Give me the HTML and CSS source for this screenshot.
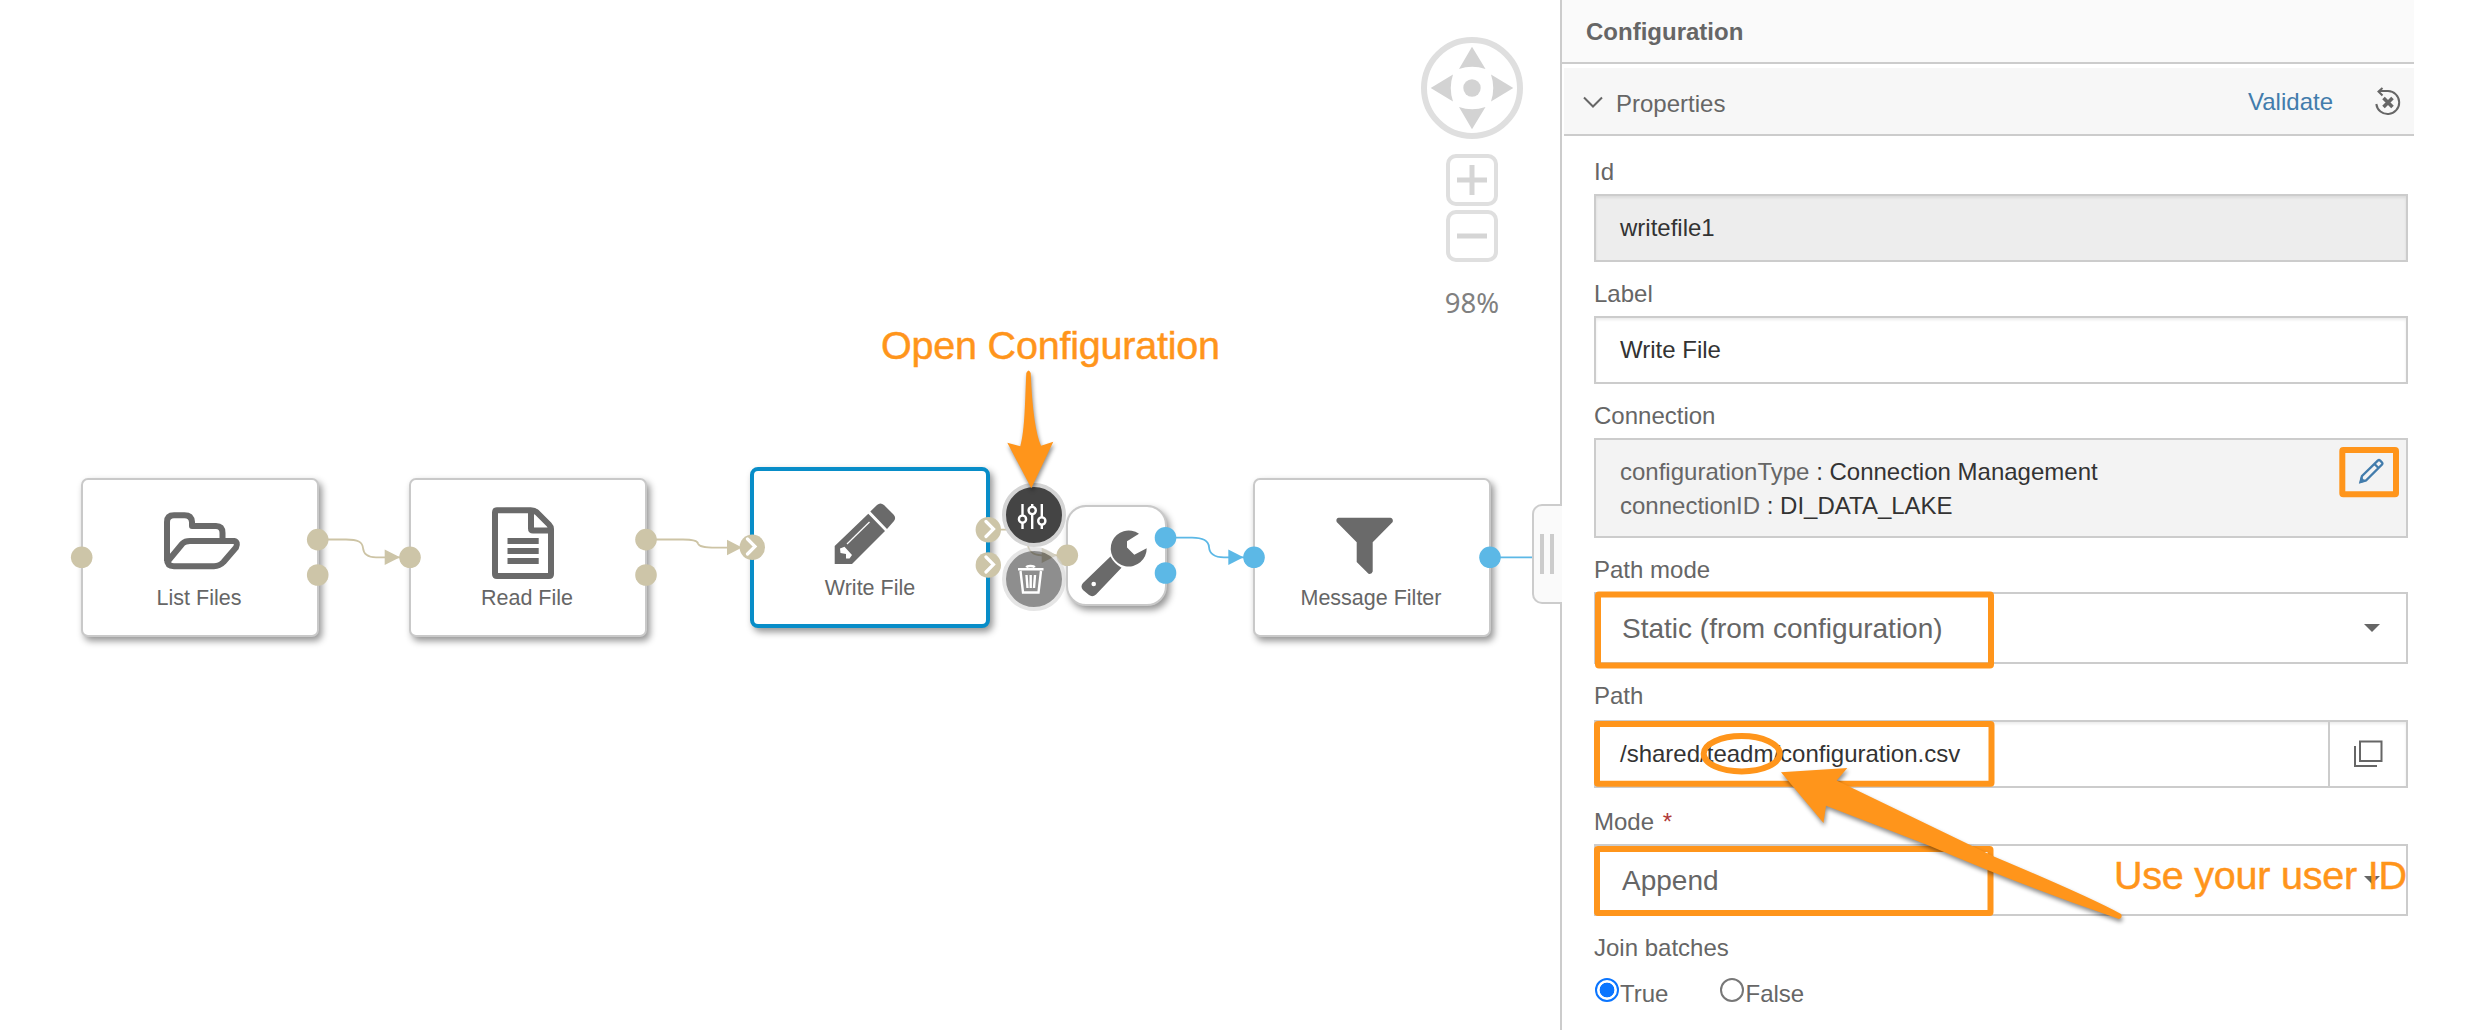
FILE: index.html
```html
<!DOCTYPE html>
<html lang="en">
<head>
<meta charset="utf-8">
<title>Pipeline Modeler</title>
<link rel="stylesheet" href="styles.css">
</head>
<body>
<div class="app">
  <main class="canvas">
    <svg class="layer" viewBox="0 0 1560 1030">
      <g class="wire sand">
        <path d="M318 539.5H346C358 539.5 362.5 542 363 548C363.5 554 367 557.3 376 557.3H400"/>
        <path d="M646 539.5H683C693 539.5 697.5 541 698 543.5C699 546.500 703 547.600 716 547.600H738"/>
        <path d="M988 529.700H1010C1022 529.700 1027 533 1027.500 542C1028 551 1032 555.300 1042 555.300H1062"/>
      </g>
      <g class="wire sky">
        <path d="M1166 537.700H1192C1204 537.700 1208.500 541 1209 547C1209.500 554 1214 557.300 1224 557.300H1246"/>
        <path d="M1490 557.300H1560"/>
      </g>
      <g class="sand-fill">
        <path d="M384.700 549.500V565L400 557.300Z"/>
        <path d="M727 539.700V555.300L742 547.500Z"/>
        <path d="M1041.700 547.700V563L1057 555.300Z"/>
      </g>
      <path class="sky-fill" d="M1228.300 549.500V565L1243.500 557.300Z"/>
    </svg>

    <div class="node list-files">
      <svg class="glyph" viewBox="0 0 238 159">
        <g class="outline" transform="translate(-81 -478)">
          <path d="M167 561V522Q167 515.300 174 515.300H184.500Q191.500 515.300 192 522V526H216Q222.500 526 222.500 533V540"/>
          <path d="M168 561L182.500 543.500Q185 541 190 541H234Q238.500 542 236 547.500L223.500 562Q219.500 566.200 214 566.200H174Q167 566.200 167 559"/>
        </g>
      </svg>
      <span class="caption">List Files</span>
    </div>
    <div class="node read-file">
      <svg class="glyph" viewBox="0 0 238 159">
        <g class="outline" transform="translate(-409 -478)">
          <path d="M531.500 510.300H497Q495 510.300 495 512.300V574Q495 576 497 576H549Q551 576 551 574V529Q551 526.500 549 524.500L537 512.500Q534.500 510.300 531 510.300V528.500Q531 530.500 533 530.500H551"/>
          <path stroke-linecap="butt" d="M507.500 541H538.700M507.500 551H538.700M507.500 561H538.700"/>
        </g>
      </svg>
      <span class="caption">Read File</span>
    </div>
    <div class="node write-file selected">
      <svg class="glyph" viewBox="0 0 240 161">
        <g transform="translate(-750 -467)">
          <path class="solid" d="M834.700 564V546L868.300 513.700L885 531L852 564ZM870.300 511.500L877 505Q880.300 502 884 505L893.500 514.500Q896.500 517.500 894 521L887 529Z"/>
          <path class="hairline" d="M847 544L869.500 522"/>
          <path class="knock" d="M840 548.500L844.500 546.700L852 555L849.500 558.500H846V554L840.500 553Z"/>
        </g>
      </svg>
      <span class="caption">Write File</span>
    </div>
    <div class="node tool">
      <svg class="glyph" viewBox="0 0 101 101">
        <g transform="translate(-1066 -505)">
          <path class="solid" d="M1139 533.700L1127 541.200V547.500L1134.300 554.700L1146.700 548.200A18 18 0 1 1 1139 533.700Z"/>
          <path class="solid" d="M1110.500 556.500Q1114 563.500 1121.500 567.700L1096 594.500Q1092.500 597.500 1089 595L1083 590Q1080 586.500 1083 583Z"/>
          <circle class="knock" cx="1093.700" cy="584" r="2.300"/>
        </g>
      </svg>
    </div>
    <div class="node message-filter">
      <svg class="glyph" viewBox="0 0 238 159">
        <path class="solid" transform="translate(-1253 -478)" d="M1338.500 517.700H1390.500Q1393.500 518.500 1392.700 522L1372.700 542.300V571.500Q1372 574.500 1368.500 573.800L1356.700 562V542.300L1336.700 522Q1335.500 518.500 1338.500 517.700Z"/>
      </svg>
      <span class="caption">Message Filter</span>
    </div>

    <svg class="layer" viewBox="0 0 1560 1030">
      <g class="sand-fill">
        <circle cx="81.700" cy="557.300" r="10.800"/><circle cx="317.700" cy="539.600" r="10.800"/><circle cx="317.700" cy="575" r="10.800"/>
        <circle cx="410" cy="557.300" r="10.800"/><circle cx="646" cy="539.600" r="10.800"/><circle cx="646" cy="575" r="10.800"/>
        <circle cx="752.300" cy="547.300" r="12.700"/><circle cx="988.300" cy="529.700" r="12.700"/><circle cx="988.300" cy="565" r="12.700"/>
        <circle cx="1067.300" cy="555.300" r="10.800"/>
      </g>
      <g class="sky-fill">
        <circle cx="1165.500" cy="537.700" r="10.800"/><circle cx="1165.500" cy="573" r="10.800"/>
        <circle cx="1254" cy="557.300" r="10.800"/><circle cx="1490" cy="557.300" r="10.800"/>
      </g>
      <path class="port-arrow" d="M747.500 539L755 546.500L747.500 554M986 521.500L993.500 529L986 536.500M986 557L993.500 564.500L986 572"/>
    </svg>

    <button class="action settings" aria-label="Open configuration">
      <svg viewBox="0 0 64 64"><path d="M20.500 17V28.500M20.500 36V42M30.200 17V20M30.200 27V42M39.800 17V30M39.800 37.500V42"/><circle cx="20.500" cy="32.200" r="3.600"/><circle cx="30.200" cy="23.500" r="3.600"/><circle cx="39.800" cy="34" r="3.600"/></svg>
    </button>
    <button class="action trash" aria-label="Delete">
      <svg viewBox="0 0 64 64"><path d="M16 23.300H41.500M24.500 21.500Q25 20 28.500 20Q32 20 32.500 21.500M18.500 25L21 46.500H36.500L39 25"/><path d="M24.500 29L25.500 42M28.700 29V42M33 29L32 42"/></svg>
    </button>

    <svg class="navigator" viewBox="0 0 104 104">
      <circle class="ring" cx="52" cy="52" r="48"/>
      <circle cx="52" cy="52" r="8.700"/>
      <path d="M52 10.700L65.500 33Q52 28.500 39 33ZM52 93.300L65.500 71Q52 75.500 39 71ZM10.700 52L33 38.500Q28.500 52 33 65.500ZM93.300 52L71 38.500Q75.500 52 71 65.500Z"/>
    </svg>
    <div class="zoom">
      <svg viewBox="0 0 52 52"><rect x="2" y="2" width="48" height="48" rx="8"/><path d="M11 26H41M26 11V41"/></svg>
      <svg viewBox="0 0 52 52"><rect x="2" y="2" width="48" height="48" rx="8"/><path d="M11 26H41"/></svg>
      <span>98%</span>
    </div>
    <div class="handle"><i></i><i></i></div>
  </main>

  <aside class="panel">
    <header class="title">Configuration</header>
    <div class="section">
      <svg class="chevron" width="20" height="12" viewBox="0 0 20 12"><path d="M1 1.500L10 10.500L19 1.500"/></svg>
      <span class="section-name">Properties</span>
      <a class="validate">Validate</a>
      <svg class="reset" width="28" height="30" viewBox="0 0 28 30"><path d="M2.300 17A11.500 11.500 0 1 0 14 4H4.500M8.500 1L4.500 4.500L8.500 8.500"/><path class="cross" d="M9.500 11L18.500 20M18.500 11L9.500 20"/></svg>
    </div>
    <form class="fields">
      <label>Id</label>
      <div class="box readonly">writefile1</div>
      <label>Label</label>
      <div class="box">Write File</div>
      <label>Connection</label>
      <div class="connection">
        <div><em>configurationType</em> : Connection Management</div>
        <div><em>connectionID</em> : DI_DATA_LAKE</div>
        <svg class="edit" width="26" height="26" viewBox="0 0 26 26"><path d="M2.500 24L4 18L20 2.500Q21 1.700 22 2.500L24 4.500Q24.800 5.500 24 6.500L8 22.500ZM16.500 6L20.500 10"/><path class="nib" d="M1.500 25L3 18.500L7.500 23.500Z"/></svg>
      </div>
      <label>Path mode</label>
      <div class="select"><span>Static (from configuration)</span><i class="caret"></i></div>
      <label class="roomy">Path</label>
      <div class="box with-help"><span>/shared/teadm/configuration.csv</span>
        <svg class="help" width="30" height="30" viewBox="0 0 30 30"><path d="M7 2.500H28.500V22H7ZM2 7V27H24"/></svg>
      </div>
      <label class="low">Mode <b>*</b></label>
      <div class="select"><span>Append</span><i class="caret"></i></div>
      <label>Join batches</label>
      <div class="radios">
        <span class="radio on"></span><span>True</span>
        <span class="radio second"></span><span>False</span>
      </div>
    </form>
  </aside>

  <svg class="notes" viewBox="0 0 2466 1030">
    <g class="frames">
      <rect x="2342.300" y="450" width="53.700" height="44.300" rx="1"/>
      <rect x="1598" y="594.500" width="393" height="71" rx="1"/>
      <rect x="1597" y="724" width="394.500" height="59.700" rx="1"/>
      <rect x="1597" y="849" width="393.500" height="64" rx="1"/>
      <ellipse cx="1741.700" cy="753.800" rx="38" ry="17.700"/>
    </g>
    <g class="pointers">
      <path d="M1026.300 373Q1028.700 368 1030.700 373Q1033 428 1041 445.700L1053.300 441.700L1031.300 488.300L1007.300 442.700L1020.300 446.300C1025 430 1025 400 1026.300 373Z"/>
      <path d="M1781 772.300L1847.300 768L1836.700 780.600L1995 857Q2090 897 2121 914Q2123 918 2119 919Q2020 885 1930 846L1826 805.700L1823.500 823Z"/>
    </g>
    <text x="881" y="359" textLength="339">Open Configuration</text>
    <text x="2114" y="889" textLength="293">Use your user ID</text>
  </svg>
</div>
</body>
</html>
```
FILE: styles.css
```css
* { box-sizing: border-box; }
body { margin: 0; background: #fff; font-family: "Liberation Sans", Arial, sans-serif; font-size: 24px; color: #666; }
.app { position: relative; display: flex; width: 2466px; height: 1030px; overflow: hidden; }

/* Graph canvas */
.canvas { position: relative; flex: 0 0 1560px; }
.layer { position: absolute; inset: 0; width: 1560px; height: 1030px; }
.wire { fill: none; stroke-width: 1.8; }
.sand { stroke: #cdc4a5; }
.sky { stroke: #5cb8e6; }
.sand-fill { fill: #cdc5a8; }
.sky-fill { fill: #5cb8e6; }
.port-arrow { fill: none; stroke: #fff; stroke-width: 3.2; stroke-linecap: round; }

.node { position: absolute; top: 478px; width: 238px; height: 159px; background: #fff; border: 2px solid #c9c9c9; border-radius: 7px; box-shadow: 3px 4px 7px rgba(0, 0, 0, .42); }
.node .glyph { position: absolute; left: -2px; top: -2px; width: 238px; height: 159px; }
.list-files { left: 81px; }
.read-file { left: 409px; }
.message-filter { left: 1253px; }
.write-file.selected { left: 750px; top: 467px; width: 240px; height: 161px; border: 4px solid #088dc8; border-radius: 8px; }
.write-file .glyph { left: -4px; top: -4px; width: 240px; height: 161px; }
.node.tool { left: 1066px; top: 505px; width: 101px; height: 101px; border-radius: 20px; }
.node.tool .glyph { width: 101px; height: 101px; }
.caption { position: absolute; left: -2px; right: 0; top: 105px; line-height: 26px; font-size: 21.5px; text-align: center; }
.write-file .caption { left: 0; top: 104px; }
.outline { fill: none; stroke: #6a6a6a; stroke-width: 6; stroke-linejoin: round; }
.solid { fill: #6a6a6a; }
.knock { fill: #fff; }
.hairline { stroke: #fff; stroke-width: 1.2; }

.action { position: absolute; left: 1002px; width: 64px; height: 64px; padding: 0; border: 4px solid #d4d4d4; border-radius: 50%; background: #444; }
.action svg { position: absolute; left: -4px; width: 64px; height: 64px; fill: none; stroke: #fff; stroke-width: 2.4; }
.settings { top: 483px; }
.settings svg { top: 0; }
.trash { top: 547px; opacity: .6; }
.trash svg { top: -5px; }

.navigator { position: absolute; left: 1420px; top: 36px; width: 104px; height: 104px; fill: #d3d3d3; }
.ring { fill: none; stroke: #dfdfdf; stroke-width: 6; }
.zoom { position: absolute; left: 1432px; top: 154px; width: 80px; display: flex; flex-direction: column; align-items: center; gap: 4px; color: #808080; font: 27.5px/36px "Noto Sans", "Open Sans", sans-serif; }
.zoom svg { width: 52px; height: 52px; fill: none; stroke: #d5d5d5; stroke-width: 5; }
.zoom rect { stroke: #dfdfdf; stroke-width: 4; }
.zoom span { margin-top: 19px; }
.handle { position: absolute; left: 1532px; top: 504px; width: 30px; height: 100px; z-index: 2; display: flex; align-items: center; gap: 6px; padding-left: 6px; background: #fafafa; border: 2px solid #ccc; border-right: 0; border-radius: 10px 0 0 10px; }
.handle i { width: 4px; height: 40px; background: #ccc; }

/* Configuration panel */
.panel { flex: 0 0 854px; border-left: 2px solid #ccc; }
.title { height: 64px; padding: 18px 0 0 24px; border-bottom: 2px solid #ccc; background: #fafafa; font-weight: bold; line-height: 28px; }
.section { display: flex; align-items: center; height: 68px; margin: 4px 0 0 2px; padding: 2px 12px 0 19px; background: #f7f7f7; border-bottom: 2px solid #ccc; }
.chevron, .reset, .help { fill: none; stroke: #666; stroke-width: 2; }
.section-name { margin: 3px auto 0 13px; line-height: 28px; }
.validate { margin-right: 41px; color: #427cac; line-height: 28px; }
.cross { stroke-width: 3.6; }
.fields { padding: 4px 6px 0 32px; color: #333; }
.fields label { display: block; padding: 18px 0 8px; line-height: 28px; color: #666; }
.fields label.roomy { padding-bottom: 10px; }
.fields label.low { padding-top: 20px; }
.fields label b { margin-left: 2px; color: #b03a3a; font-weight: normal; }
.box { height: 68px; padding: 18px 24px 0; border: 2px solid #ccc; line-height: 28px; box-shadow: inset 0 2px 3px rgba(0, 0, 0, .08); }
.readonly { background: #ededed; }
.connection { position: relative; height: 100px; padding: 15px 24px 0; border: 2px solid #ccc; background: #f3f3f3; line-height: 34px; }
.connection em { font-style: normal; color: #666; }
.edit { position: absolute; right: 22px; top: 18px; fill: none; stroke: #427cac; stroke-width: 2.4; }
.edit .nib { fill: #427cac; stroke: none; }
.select { display: flex; align-items: center; justify-content: space-between; height: 72px; padding: 0 26px; border: 2px solid #ccc; font-size: 28px; line-height: 32px; color: #666; }
.select span { margin-top: 2px; }
.caret { border: 8px solid transparent; border-top-color: #666; border-bottom: 0; }
.with-help { display: flex; justify-content: space-between; padding-right: 0; }
.help { box-sizing: content-box; margin-top: -18px; padding: 17px 23px; border-left: 2px solid #ccc; }
.radios { display: flex; align-items: flex-start; color: #666; line-height: 28px; padding-top: 10px; }
.radio { width: 24px; height: 24px; margin: -2px 1px 0 1px; border: 2px solid #777; border-radius: 50%; }
.radio.on { border-color: #0a75ff; background: radial-gradient(circle, #0a75ff 7px, #fff 7.700px); }
.radio.second { margin-left: 52px; }

/* Call-outs drawn over the interface */
.notes { position: absolute; left: 0; top: 0; width: 2466px; height: 1030px; z-index: 3; pointer-events: none; }
.frames { fill: none; stroke: #ff951b; stroke-width: 6; }
.pointers { fill: #ff951b; filter: drop-shadow(1px 3px 2px rgba(0, 0, 0, .45)); }
.notes text { fill: #ff951b; stroke: #ff951b; stroke-width: .5; font-size: 39.500px; }
```
